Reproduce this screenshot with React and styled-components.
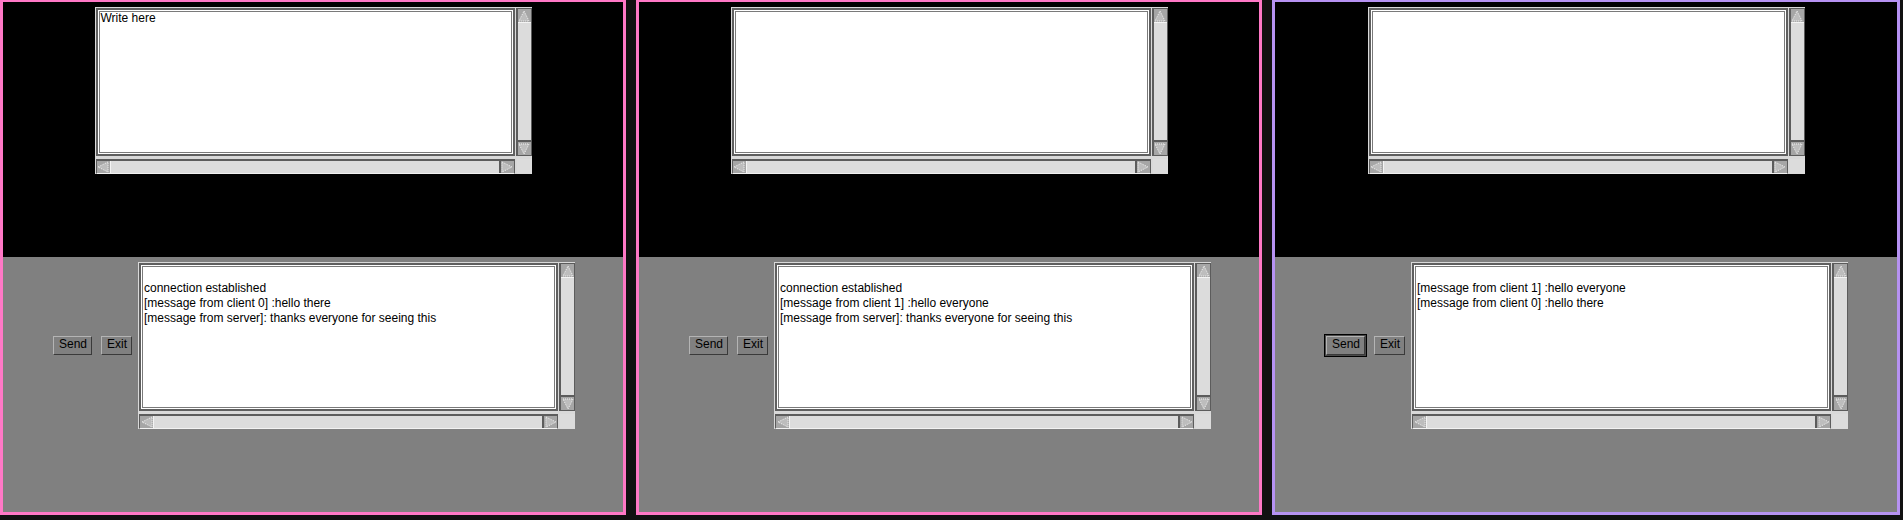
import React from 'react';
import styled, { createGlobalStyle } from 'styled-components';

const GlobalStyle = createGlobalStyle`
  html, body { margin: 0; padding: 0; background: #111111; }
  body {
    font-family: "Liberation Sans", Arial, sans-serif;
    font-size: 12px;
    overflow: hidden;
  }
`;

const Desktop = styled.div`
  display: flex;
  gap: 10px;
  height: 520px;
  align-items: flex-start;
`;

const Window = styled.div`
  width: ${(p) => p.$w}px;
  height: 515px;
  box-sizing: border-box;
  border: 3px solid ${(p) => p.$color};
  border-top-width: 2px;
  display: grid;
  grid-template-rows: 255px 255px;
`;

const Pane = styled.div`
  background: ${(p) => (p.$dark ? '#000000' : '#808080')};
  display: flex;
  justify-content: center;
  align-items: flex-start;
  padding-top: 5px;
`;

const Row = styled.div`
  display: flex;
  align-items: center;
`;

const Controls = styled.div`
  display: flex;
  gap: 5px;
  margin-right: 4px;
`;

const Button = styled.button`
  margin: 2px;
  height: 19px;
  box-sizing: border-box;
  padding: 0 4px 3px 5px;
  font-family: "Liberation Sans", Arial, sans-serif;
  font-size: 12px;
  line-height: 14px;
  color: #000;
  background: #808080;
  border: 1px solid;
  border-color: #b4b4b4 #3a3a3a #3a3a3a #b4b4b4;
  border-radius: 0;
  outline: none;
  box-shadow: ${(p) => (p.$focused ? '0 0 0 1px #4a4a4a, 0 0 0 2px #000' : 'none')};
  cursor: default;
`;

const Frame = styled.div`
  width: 437px;
  height: 167px;
  box-sizing: border-box;
  display: grid;
  grid-template-columns: 1fr 15px;
  grid-template-rows: 1fr 15px;
  column-gap: 2px;
  row-gap: 3px;
  padding: 1px 0 0 1px;
  background: #d9d9d9;
`;

const TextBox = styled.div`
  background: #ffffff;
  border: 2px solid #5f5f5f;
  box-shadow: inset 0 0 0 1px #ffffff, inset 0 0 0 2px #7a7a7a;
  padding: 1px 3px 0;
  line-height: 15px;
  white-space: pre;
  overflow: hidden;
  color: #000;
`;

const VScroll = styled.div`
  display: flex;
  flex-direction: column;
  background: #d9d9d9;
  border: 1px solid #5c5c5c;
  border-left-width: 2px;
  box-sizing: border-box;
  margin-left: -1px;
  width: 16px;
`;

const HScroll = styled.div`
  display: flex;
  flex-direction: row;
  background: #d9d9d9;
  border: 1px solid #5c5c5c;
  border-top-width: 2px;
  border-bottom-color: #f2f2f2;
  box-sizing: border-box;
`;

const Corner = styled.div`
  background: #dcdcdc;
`;

const ArrowBox = styled.div`
  flex: none;
  width: ${(p) => (p.$vertical ? '100%' : '13px')};
  height: ${(p) => (p.$vertical ? '13px' : '100%')};
  background: #a6a6a6;
  display: flex;
  align-items: center;
  justify-content: center;
  svg { display: block; }
`;

const Thumb = styled.div`
  flex: 1;
  background: #dcdcdc;
  ${(p) =>
    p.$vertical
      ? 'border-top: 1px solid #f4f4f4; border-bottom: 2px solid #5c5c5c;'
      : 'border-left: 1px solid #f4f4f4; border-right: 2px solid #5c5c5c;'}
`;

const triangles = {
  up: '6,1 11,11 1,11',
  down: '1,1 11,1 6,11',
  left: '1,6 11,1 11,11',
  right: '1,1 11,6 1,11',
};

function Arrow({ dir }) {
  const vertical = dir === 'up' || dir === 'down';
  return (
    <ArrowBox $vertical={vertical}>
      <svg width="12" height="12" viewBox="0 0 12 12">
        <polygon
          points={triangles[dir]}
          fill="#bdbdbd"
          stroke="#f2f2f2"
          strokeWidth="1"
          strokeDasharray="1 1"
        />
      </svg>
    </ArrowBox>
  );
}

function ScrolledText({ lines }) {
  return (
    <Frame>
      <TextBox>{lines.join('\n')}</TextBox>
      <VScroll>
        <Arrow dir="up" />
        <Thumb $vertical />
        <Arrow dir="down" />
      </VScroll>
      <HScroll>
        <Arrow dir="left" />
        <Thumb />
        <Arrow dir="right" />
      </HScroll>
      <Corner />
    </Frame>
  );
}

const clients = [
  {
    color: '#ff78c6',
    width: 626,
    input: ['Write here'],
    focused: false,
    log: [
      '',
      'connection established',
      '[message from client 0] :hello there',
      '[message from server]: thanks everyone for seeing this',
    ],
  },
  {
    color: '#ff78c6',
    width: 626,
    input: [''],
    focused: false,
    log: [
      '',
      'connection established',
      '[message from client 1] :hello everyone',
      '[message from server]: thanks everyone for seeing this',
    ],
  },
  {
    color: '#b692f2',
    width: 628,
    input: [''],
    focused: true,
    log: ['', '[message from client 1] :hello everyone', '[message from client 0] :hello there'],
  },
];

export default function App() {
  return (
    <>
      <GlobalStyle />
      <Desktop>
        {clients.map((c, i) => (
          <Window key={i} $color={c.color} $w={c.width}>
            <Pane $dark>
              <ScrolledText lines={c.input} />
            </Pane>
            <Pane>
              <Row>
                <Controls>
                  <Button $focused={c.focused}>Send</Button>
                  <Button>Exit</Button>
                </Controls>
                <ScrolledText lines={c.log} />
              </Row>
            </Pane>
          </Window>
        ))}
      </Desktop>
    </>
  );
}
